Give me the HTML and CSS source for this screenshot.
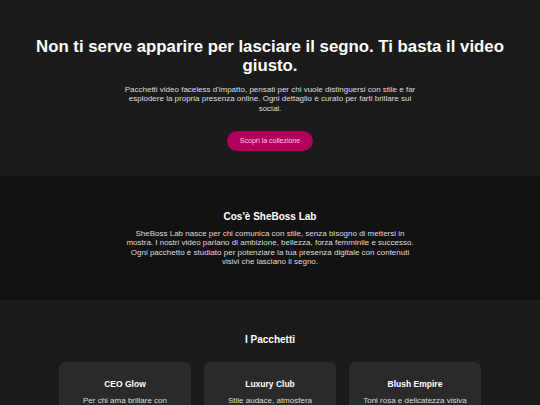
FILE: index.html
```html
<!DOCTYPE html>
<html lang="it">
<head>
  <meta charset="UTF-8" />
  <meta name="viewport" content="width=device-width, initial-scale=1" />
  <title>SheBoss Lab</title>
  <link rel="stylesheet" href="styles.css">
</head>
<body>

  <section class="hero">
    <h1>Non ti serve apparire per lasciare il segno. Ti basta il video giusto.</h1>
    <p>Pacchetti video faceless d'impatto, pensati per chi vuole distinguersi con stile e far esplodere la propria presenza online. Ogni dettaglio è curato per farti brillare sui social.</p>
    <a href="#pacchetti" class="btn">Scopri la collezione</a>
  </section>

  <section class="about">
    <h2>Cos'è SheBoss Lab</h2>
    <p>SheBoss Lab nasce per chi comunica con stile, senza bisogno di mettersi in mostra. I nostri video parlano di ambizione, bellezza, forza femminile e successo. Ogni pacchetto è studiato per potenziare la tua presenza digitale con contenuti visivi che lasciano il segno.</p>
  </section>

  <section class="packs" id="pacchetti">
    <h2>I Pacchetti</h2>
    <div class="cards">
      <div class="card">
        <h3>CEO Glow</h3>
        <p>Per chi ama brillare con classe e determinazione, ogni giorno.</p>
      </div>
      <div class="card">
        <h3>Luxury Club</h3>
        <p>Stile audace, atmosfera esclusiva e dettagli di lusso.</p>
      </div>
      <div class="card">
        <h3>Blush Empire</h3>
        <p>Toni rosa e delicatezza visiva per un impero tutto femminile.</p>
      </div>
    </div>
  </section>

</body>
</html>
```

FILE: styles.css
```css
body {
  margin: 0;
  font-family: "Liberation Sans", Arial, sans-serif;
  background: #1b1b1b;
  color: #fff;
}
section {
  text-align: center;
}
h1, h2, h3, p {
  margin: 0;
}
.hero {
  background: #1b1b1b;
  padding: 38px 20px 25px;
}
.hero h1 {
  font-size: 16.8px;
  line-height: 18.5px;
  font-weight: bold;
}
.hero p {
  max-width: 300px;
  margin: 9.6px auto 0;
  font-size: 8px;
  line-height: 9.5px;
  color: #ddd;
}
.btn {
  display: block;
  width: fit-content;
  margin: 18px auto 0;
  padding: 0 13px;
  height: 20px;
  line-height: 20px;
  border-radius: 10px;
  background: #b1005c;
  color: #ffc6e3;
  font-size: 7px;
  text-decoration: none;
}
.about {
  background: #121212;
  padding: 34.5px 20px 34px;
}
h2 {
  font-size: 10px;
  font-weight: bold;
}
.about p {
  max-width: 294px;
  margin: 7.2px auto 0;
  font-size: 8px;
  line-height: 9.4px;
  color: #ddd;
}
.packs {
  background: #1b1b1b;
  padding: 34px 20px 40px;
}
.cards {
  display: flex;
  justify-content: center;
  gap: 13px;
  margin-top: 17px;
}
.card {
  width: 132px;
  box-sizing: border-box;
  padding: 16.3px 14px 16px;
  background: #2a2a2a;
  border-radius: 6px;
}
.card h3 {
  font-size: 8.5px;
  font-weight: bold;
}
.card p {
  margin-top: 7.2px;
  font-size: 8px;
  line-height: 9.4px;
  color: #ddd;
}
```
